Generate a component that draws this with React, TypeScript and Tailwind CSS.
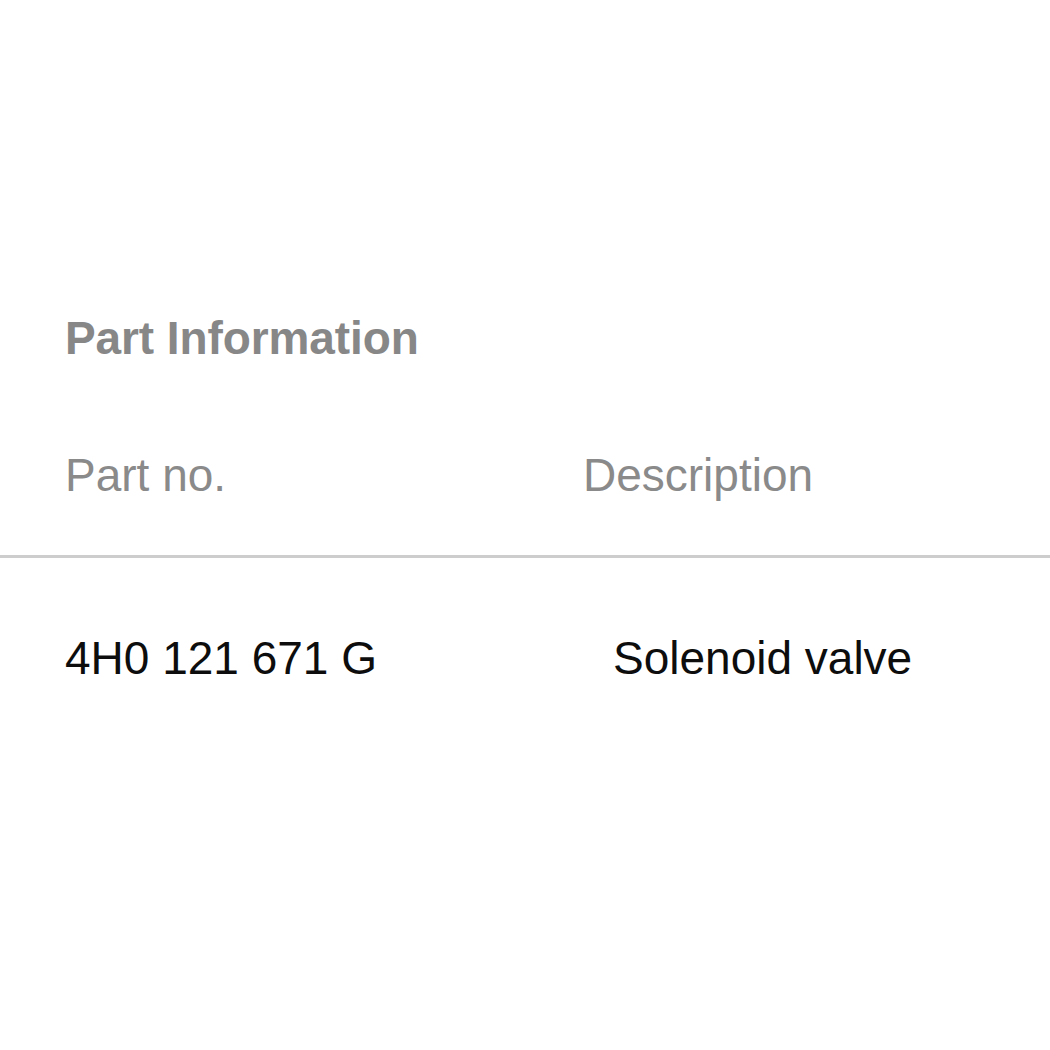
export default function App() {
  return (
    <main className="w-[1050px] h-[1050px] bg-white font-['Liberation_Sans',Arial,sans-serif] overflow-hidden">
      <div className="pt-[315px]">
        <h2 className="pl-[65px] h-[46px] leading-[46px] text-[46px] font-bold text-[#878787] tracking-[-0.1px]">
          Part Information
        </h2>

        <div className="mt-[91px] flex h-[46px] items-center text-[46px] text-[#8a8a8a]">
          <div className="pl-[65px] w-[583px] leading-none">Part no.</div>
          <div className="leading-none">Description</div>
        </div>

        <div className="mt-[57px] h-[3px] bg-[#cdcdcd]" />

        <div className="mt-[77px] flex h-[46px] items-center text-[46px] text-[#0d0d0d]">
          <div className="pl-[65px] w-[613px] leading-none">4H0 121 671 G</div>
          <div className="leading-none">Solenoid valve</div>
        </div>
      </div>
    </main>
  );
}
